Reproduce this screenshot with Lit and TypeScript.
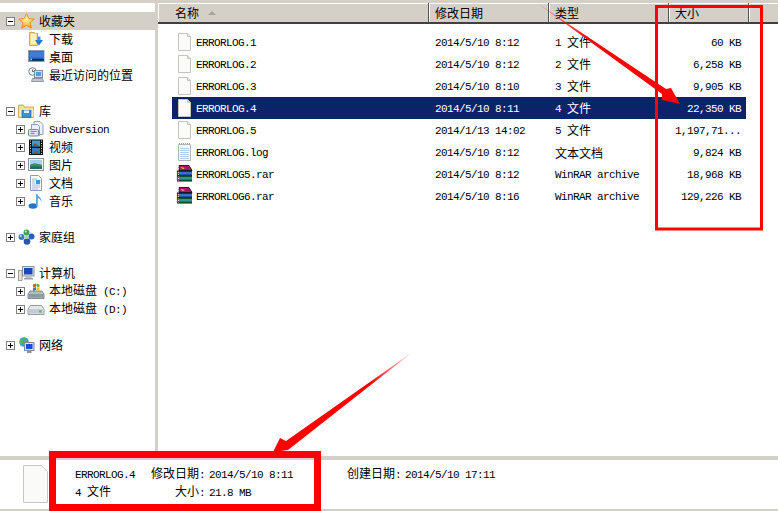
import { LitElement, html, css, svg } from "lit";
import { customElement } from "lit/decorators.js";

const CJK = /([\u3000-\u9fff\uff00-\uffef]+)/;
const t = (s: string) =>
  s.split(CJK).filter(Boolean).map((p) =>
    CJK.test(p) ? html`<span class="cjk">${p}</span>` : html`<span class="lat">${p}</span>`);

const icons: Record<string, unknown> = {
  star: svg`<defs><radialGradient id="st" cx=".5" cy=".4" r=".6"><stop offset="0" stop-color="#fff6b0"/><stop offset=".6" stop-color="#fdc63f"/><stop offset="1" stop-color="#f08a1c"/></radialGradient></defs>
    <polygon points="8.5,0.5 10.8,5.5 16.3,6.1 12.2,9.8 13.4,15.2 8.5,12.4 3.6,15.2 4.8,9.8 .7,6.1 6.2,5.5" fill="url(#st)" stroke="#e8862a" stroke-width=".8"/>`,
  download: svg`<path d="M1.5 1.5h5l1 1h2v12h-8z" fill="#f6dc8c" stroke="#c9a95a"/><rect x="3" y="3" width="5" height="10" fill="#fff2c0"/><path d="M7 9h8l-4 5.500z" fill="#1f78d0"/><rect x="9.500" y="5.500" width="3" height="4" fill="#3f97e2"/>`,
  desktop: svg`<rect x=".5" y="1.500" width="15.500" height="11" fill="#2260b8" stroke="#8a9ab0"/><rect x="1.500" y="2.500" width="13.500" height="6" fill="#3a80d0"/><rect x="4" y="10" width="12" height="1.600" fill="#1c2430"/><rect x="2.500" y="9.500" width="1.500" height="1.500" fill="#f2b33a"/>`,
  recent: svg`<circle cx="4.500" cy="4.500" r="3.800" fill="#eef2f4" stroke="#7a8792"/><path d="M4.500 2.500v2h2" stroke="#444" fill="none" stroke-width=".8"/><rect x="6.500" y="3.500" width="8" height="7" fill="#cfe0f4" stroke="#7f8e9e"/><rect x="8" y="5" width="5" height="4" fill="#5b97dc"/><path d="M4.500 11.500h10l1 3h-12z" fill="#c4c8cc" stroke="#7a8792" stroke-width=".8"/>`,
  library: svg`<path d="M.5 2.500h5l1 1.500h9v10.500h-15z" fill="#f6dd92" stroke="#c8ac60"/><path d="M1.500 6.500h14v7h-14z" fill="#fbeebf"/><rect x="4" y="7.500" width="9" height="7" fill="#3c8ed8" stroke="#2668ad" stroke-width=".7"/><rect x="6" y="7.500" width="5" height="2.500" fill="#e4f0fa"/><rect x="0.500" y="1.500" width="5" height="1.500" fill="#9fcf70"/>`,
  doc: svg`<path d="M6 .5h6l3 3v10h-9z" fill="#eef3fa" stroke="#8ea0b8"/><path d="M3.500 3.500h6l2 2v9h-8z" fill="#eaf0f8" stroke="#8ea0b8"/><rect x=".5" y="8.500" width="10" height="6.500" rx="1" fill="#dbe6f4" stroke="#6f89aa"/><path d="M2.500 10.500h6M2.500 12.500h4" stroke="#6f89aa"/>`,
  film: svg`<rect x="1" y="0.500" width="14" height="15.500" fill="#111"/><rect x="4" y="1.500" width="8" height="6" fill="#3f9bd8"/><rect x="4" y="9" width="8" height="6" fill="#2e7cc8"/><path d="M4 7l3-3 5 3.500z M4 15l4-3 4 3z" fill="#7a5a30"/><path d="M2 2h1M2 4.500h1M2 7h1M2 9.500h1M2 12h1M2 14.500h1M13 2h1M13 4.500h1M13 7h1M13 9.500h1M13 12h1M13 14.500h1" stroke="#ddd"/>`,
  picture: svg`<rect x=".5" y="1.500" width="15" height="12" fill="#f2f4f4" stroke="#8d9498"/><rect x="2" y="3" width="12" height="9" fill="#a6d0ee"/><path d="M2 8c3-2 6-2 12 0v4h-12z" fill="#3d8a5c"/><path d="M2 10c3-1 8-1 12 0v2h-12z" fill="#1f6a6c"/>`,
  pagedoc: svg`<path d="M2.500 .5h8l3 3v12h-11z" fill="#f8fbff" stroke="#8d9cb8"/><path d="M4 4h5M4 6h3M4 8h3M4 10h8M4 12h8M4 14h6" stroke="#a9b4d8"/><rect x="8" y="5" width="4" height="4" fill="#4f8fd8"/>`,
  music: svg`<ellipse cx="5" cy="13" rx="4.400" ry="2.800" fill="#1f78cc"/><path d="M8 13V1h1.500c.5 2.500 4.500 3.500 4 8-.8-2.500-2.200-3.600-3.600-3.800V13z" fill="#57ace6"/>`,
  homegroup: svg`<circle cx="8.500" cy="3.500" r="3" fill="#3fa05a"/><circle cx="3.500" cy="8" r="3" fill="#3a78d0"/><circle cx="13.500" cy="7.500" r="3" fill="#2c5cc8"/><circle cx="9" cy="12.500" r="3.300" fill="#2a52c0"/><circle cx="8.500" cy="8" r="2" fill="#a8d8a0"/><circle cx="7.800" cy="2.600" r="1" fill="#c8f0c8"/><circle cx="2.800" cy="7" r="1" fill="#c8def8"/>`,
  computer: svg`<rect x=".5" y="5.500" width="3.500" height="10" fill="#e8e4d4" stroke="#8a8a80" stroke-width=".8"/><rect x="4.500" y="1.500" width="11.500" height="9.500" fill="#dfe4ea" stroke="#8a94a0"/><rect x="6" y="3" width="8.500" height="6.500" fill="#1b47b8"/><rect x="7.500" y="11" width="6" height="2" fill="#b8bcc0"/><rect x="6" y="13" width="9" height="1.500" fill="#9aa0a6"/>`,
  driveC: svg`<path d="M2 8h12l2 3v4.500h-16v-4.500z" fill="#b4bcc4" stroke="#6c7680" stroke-width=".8"/><rect x="1" y="11" width="14" height="3.500" fill="#8d979f"/><rect x="11.500" y="12" width="2" height="1.500" fill="#5fc850"/><path d="M5 1.500l3-1v3l-3 1z" fill="#e8502c"/><path d="M8.500.5l3 1v3l-3-1z" fill="#62b23a"/><path d="M5 5l3-1v3l-3 1z" fill="#3a78d0"/><path d="M8.500 4l3 1v3l-3-1z" fill="#f2c030"/>`,
  driveD: svg`<path d="M2.500 4.500h11l2.500 3.500v5.500h-16v-5.500z" fill="#e4e8ea" stroke="#7b858d" stroke-width=".8"/><rect x="1" y="8" width="14.500" height="4.500" fill="#c4ccd2"/><rect x="11" y="9.500" width="2.500" height="2" fill="#58b848"/>`,
  network: svg`<circle cx="6" cy="5" r="4.800" fill="#3aa0d8"/><path d="M2 3c2-1 3 0 3 2s-2 2-3 1zM6 1c2 0 3 1 3 3l-3-1z" fill="#56b848"/><rect x="6.500" y="5.500" width="9.500" height="8" fill="#d8dfe8" stroke="#7c8894"/><rect x="8" y="7" width="6.500" height="5" fill="#1750c8"/><rect x="9" y="13.500" width="4.500" height="2.500" fill="#8a94a0"/>`,
};

const fileIcon = svg`<svg class="ficon" width="16" height="18" viewBox="0 0 16 18"><path d="M2.500 .5h9l3 3v14h-12z" fill="#fbfbf9" stroke="#c4c4bf"/><path d="M11.500 .5v3h3" fill="#e4e4e0" stroke="#c4c4bf"/></svg>`;
const logIcon = svg`<svg class="ficon" width="16" height="18" viewBox="0 0 16 18"><path d="M2.500 1.500h12v16h-12z" fill="#f4f7fb" stroke="#b0b4b8"/><path d="M4 5.500h9M4 7.500h9M4 9.500h9M4 11.500h9M4 13.500h9M4 15.500h9" stroke="#b6cbe6"/><path d="M3 .5h11" stroke="#999" stroke-dasharray="1 1"/></svg>`;
const rarIcon = svg`<svg class="ficon" width="17" height="17" viewBox="0 0 17 17"><path d="M3 .5h10l3 5h-13z" fill="#a8156c" stroke="#222"/><rect x="1" y="6" width="15" height="5" fill="#1c4fb0"/><rect x="1" y="11" width="15" height="5" fill="#0c8a50"/><path d="M.5 6v10M2.500 1v15" stroke="#ddd" stroke-dasharray="1 1"/><path d="M1 6h15M1 11h15M1 16h15" stroke="#111"/><path d="M4 2l5 1-2 1z" fill="#f0d040"/><path d="M3 8h13M3 13h13" stroke="#6aa8f0" stroke-width=".8"/></svg>`;

interface NavRow { level?: number; exp?: string; icon?: string; label?: string; sel?: boolean; }
const nav: NavRow[] = [
  { level: 0, exp: "-", icon: "star", label: "收藏夹", sel: true },
  { level: 1, icon: "download", label: "下载" },
  { level: 1, icon: "desktop", label: "桌面" },
  { level: 1, icon: "recent", label: "最近访问的位置" },
  {},
  { level: 0, exp: "-", icon: "library", label: "库" },
  { level: 1, exp: "+", icon: "doc", label: "Subversion" },
  { level: 1, exp: "+", icon: "film", label: "视频" },
  { level: 1, exp: "+", icon: "picture", label: "图片" },
  { level: 1, exp: "+", icon: "pagedoc", label: "文档" },
  { level: 1, exp: "+", icon: "music", label: "音乐" },
  {},
  { level: 0, exp: "+", icon: "homegroup", label: "家庭组" },
  {},
  { level: 0, exp: "-", icon: "computer", label: "计算机" },
  { level: 1, exp: "+", icon: "driveC", label: "本地磁盘 (C:)" },
  { level: 1, exp: "+", icon: "driveD", label: "本地磁盘 (D:)" },
  {},
  { level: 0, exp: "+", icon: "network", label: "网络" },
];

const files = [
  ["ERRORLOG.1", "2014/5/10 8:12", "1 文件", "60 KB", fileIcon],
  ["ERRORLOG.2", "2014/5/10 8:12", "2 文件", "6,258 KB", fileIcon],
  ["ERRORLOG.3", "2014/5/10 8:10", "3 文件", "9,905 KB", fileIcon],
  ["ERRORLOG.4", "2014/5/10 8:11", "4 文件", "22,350 KB", fileIcon],
  ["ERRORLOG.5", "2014/1/13 14:02", "5 文件", "1,197,71...", fileIcon],
  ["ERRORLOG.log", "2014/5/10 8:12", "文本文档", "9,824 KB", logIcon],
  ["ERRORLOG5.rar", "2014/5/10 8:12", "WinRAR archive", "18,968 KB", rarIcon],
  ["ERRORLOG6.rar", "2014/5/10 8:16", "WinRAR archive", "129,226 KB", rarIcon],
] as const;

@customElement("app-root")
export class AppRoot extends LitElement {
  static styles = css`
    :host { display: block; position: relative; width: 778px; height: 511px; overflow: hidden; background: #fff; color: #000; font: 12px/18px "Noto Sans CJK SC", sans-serif; }
    .cjk { font: 12px/18px "Noto Sans CJK SC", sans-serif; }
    .lat { font: 11px/18px "Liberation Mono", monospace; letter-spacing: -0.6px; white-space: pre; }
    .page { display: flex; flex-direction: column; height: 511px; }
    .top { height: 3px; background: #d4d0c8; flex: none; }
    .main { display: flex; height: 453px; flex: none; }
    .nav { width: 155px; flex: none; padding-top: 9px; box-sizing: border-box; }
    .splitter { width: 3px; background: #d4d0c8; flex: none; }
    .nrow { height: 18px; display: flex; align-items: center; white-space: nowrap; }
    .nrow.sel { background: #d4d0c8; }
    .l0 { padding-left: 6px; }
    .l1 { padding-left: 16px; }
    .exp { width: 9px; height: 9px; box-sizing: border-box; border: 1px solid #808080; background: #fff; position: relative; flex: none; margin-right: 3px; }
    .exp.none { visibility: hidden; }
    .exp::before { content: ""; position: absolute; left: 1px; top: 3px; width: 5px; height: 1px; background: #000; }
    .exp.plus::after { content: ""; position: absolute; left: 3px; top: 1px; width: 1px; height: 5px; background: #000; }
    .nicon { width: 17px; height: 17px; flex: none; margin-right: 4px; overflow: visible; }
    .list { flex: 1; min-width: 0; }
    .head { height: 21px; box-sizing: border-box; display: grid; grid-template-columns: 271px 120px 120px 80px 1fr; background: #d4d0c8; border-bottom: 2px solid #404040; box-shadow: inset 0 1px 0 #fff; }
    .hcell { display: flex; align-items: center; padding-left: 6px; border-right: 1px solid #555; box-shadow: inset 1px 1px 0 #fff; gap: 9px; }
    .hcell:first-child { padding-left: 17px; }
    .hcell:last-child { border-right: none; }
    .sort { width: 0; height: 0; border-left: 4px solid transparent; border-right: 4px solid transparent; border-bottom: 4px solid #a8a49c; }
    .rows { padding: 7px 32px 0 14px; }
    .frow { height: 22px; display: grid; grid-template-columns: 257px 120px 120px 1fr; align-items: center; white-space: nowrap; }
    .frow.sel { background: #0a246a; color: #fff; }
    .frow .cjk { vertical-align: -1px; }
    .fname { display: flex; align-items: center; gap: 4px; padding-left: 4px; }
    .iconbox { width: 16px; height: 18px; flex: none; }
    .ficon { display: block; }
    .pad { padding-left: 6px; }
    .size { text-align: right; padding-right: 5px; }
    .status { flex: 1; display: flex; border-top: 4px solid #d4d0c8; border-bottom: 2px solid #d4d0c8; padding: 5px 0 0 21px; }
    .bigfile { width: 28px; height: 38px; flex: none; margin-right: 26px; }
    .sgrid { display: grid; grid-template-columns: 76px 58px 138px 58px auto; grid-auto-rows: 18px; align-items: center; white-space: nowrap; }
    .right { text-align: right; padding-right: 4px; }
    .overlay { position: absolute; inset: 0; width: 778px; height: 511px; pointer-events: none; }
  `;

  render() {
    return html`
      <div class="page">
        <div class="top"></div>
        <div class="main">
          <div class="nav">
            ${nav.map((n) => n.label ? html`
              <div class="nrow l${n.level} ${n.sel ? "sel" : ""}">
                <span class="exp ${n.exp === "+" ? "plus" : n.exp ? "" : "none"}"></span>
                <svg class="nicon" viewBox="0 0 17 17">${icons[n.icon!]}</svg>
                <span>${t(n.label)}</span>
              </div>` : html`<div class="nrow"></div>`)}
          </div>
          <div class="splitter"></div>
          <div class="list">
            <div class="head">
              <div class="hcell">${t("名称")}<span class="sort"></span></div>
              <div class="hcell">${t("修改日期")}</div>
              <div class="hcell">${t("类型")}</div>
              <div class="hcell">${t("大小")}</div>
              <div class="hcell"></div>
            </div>
            <div class="rows">
              ${files.map((f, i) => html`
                <div class="frow ${i === 3 ? "sel" : ""}">
                  <div class="fname"><span class="iconbox">${f[4]}</span><span>${t(f[0])}</span></div>
                  <div class="pad">${t(f[1])}</div>
                  <div class="pad">${t(f[2])}</div>
                  <div class="size">${t(f[3])}</div>
                </div>`)}
            </div>
          </div>
        </div>
        <div class="status">
          <svg class="bigfile" viewBox="0 0 28 38"><path d="M2.500 .5h18l6 6v31h-24z" fill="#fafaf8" stroke="#c8c8c4"/></svg>
          <div class="sgrid">
            <span>${t("ERRORLOG.4")}</span>
            <span>${t("修改日期:")}</span>
            <span>${t("2014/5/10 8:11")}</span>
            <span>${t("创建日期:")}</span>
            <span>${t("2014/5/10 17:11")}</span>
            <span>${t("4 文件")}</span>
            <span class="right">${t("大小:")}</span>
            <span>${t("21.8 MB")}</span>
          </div>
        </div>
      </div>
      <svg class="overlay" viewBox="0 0 778 511">
        <defs>
          <linearGradient id="a1" gradientUnits="userSpaceOnUse" x1="537" y1="3" x2="590" y2="40"><stop offset="0" stop-color="#f00" stop-opacity=".3"/><stop offset="1" stop-color="#f00"/></linearGradient>
          <linearGradient id="a2" gradientUnits="userSpaceOnUse" x1="414" y1="351" x2="370" y2="382"><stop offset="0" stop-color="#f00" stop-opacity=".1"/><stop offset="1" stop-color="#f00"/></linearGradient>
        </defs>
        <rect x="656.500" y="6.500" width="105" height="222.500" fill="none" stroke="#f00" stroke-width="3"/>
        <rect x="52.500" y="454.500" width="265" height="53" fill="none" stroke="#f00" stroke-width="7"/>
        <polygon points="537,3 666,89 671,88 680,104 662,100 662,94" fill="url(#a1)"/>
        <polygon points="414,351 288,450 273,452 280,438 286,441" fill="url(#a2)"/>
      </svg>
    `;
  }
}
